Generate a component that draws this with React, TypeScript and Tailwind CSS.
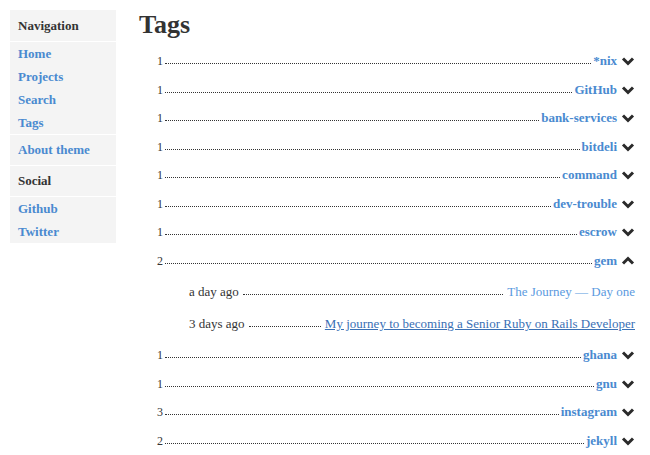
const tags = [
  { name: "*nix", count: 1 },
  { name: "GitHub", count: 1 },
  { name: "bank-services", count: 1 },
  { name: "bitdeli", count: 1 },
  { name: "command", count: 1 },
  { name: "dev-trouble", count: 1 },
  { name: "escrow", count: 1 },
  { name: "gem", count: 2, open: true },
  { name: "ghana", count: 1 },
  { name: "gnu", count: 1 },
  { name: "instagram", count: 3 },
  { name: "jekyll", count: 2 },
];

const posts = [
  { when: "a day ago", title: "The Journey — Day one", visited: false },
  { when: "3 days ago", title: "My journey to becoming a Senior Ruby on Rails Developer", visited: true },
];

function Chevron({ up }: { up?: boolean }) {
  return (
    <svg width="14" height="10" viewBox="0 0 14 10" className={up ? "rotate-180" : ""}>
      <path d="M2 2.5 L7 7.5 L12 2.5" fill="none" stroke="#2b2b2b" strokeWidth="3" strokeLinejoin="miter" />
    </svg>
  );
}

function Sidebar() {
  return (
    <aside className="w-[106px] shrink-0 self-start bg-[#f4f4f4] text-[13px] font-bold">
      <div className="h-[31px] flex items-center px-2 text-[#333]">Navigation</div>
      <ul className="border-t border-white">
        {["Home", "Projects", "Search", "Tags"].map((l) => (
          <li key={l} className="h-[23px] flex items-center px-2 text-[#4a8ad0]">
            {l}
          </li>
        ))}
      </ul>
      <div className="border-t border-white h-[31px] flex items-center px-2 text-[#4a8ad0]">About theme</div>
      <div className="border-t border-white h-[31px] flex items-center px-2 text-[#333]">Social</div>
      <ul className="border-t border-white">
        {["Github", "Twitter"].map((l) => (
          <li key={l} className="h-[23px] flex items-center px-2 text-[#4a8ad0]">
            {l}
          </li>
        ))}
      </ul>
    </aside>
  );
}

function Leader({ wide }: { wide?: boolean }) {
  return (
    <span
      className={
        wide
          ? "flex-1 mx-[4px] -translate-y-[1px] border-b border-dotted border-[#333]"
          : "flex-1 mx-[2px] -translate-y-[1px] border-b border-dotted border-[#333]"
      }
    />
  );
}

export default function App() {
  return (
    <div
      className="w-[650px] h-[455px] overflow-hidden bg-white flex gap-[23px] pl-[10px] pt-[10px]"
      style={{ fontFamily: '"Liberation Serif", serif' }}
    >
      <Sidebar />
      <main className="w-[496px]">
        <h1 className="text-[26px] font-bold text-[#333] leading-[30px]">Tags</h1>
        <ul className="mt-[7px] text-[13px]">
          {tags.map((t) => (
            <li key={t.name}>
              <div className="h-[28.5px] flex items-baseline pt-[4px] pl-[18px]">
                <span className="text-[#333] text-[12px]">{t.count}</span>
                <Leader />
                <span className="font-bold text-[#4a8ad0]">{t.name}</span>
                <span className="ml-[4px] w-[14px] flex justify-center translate-y-[1px]">
                  <Chevron up={t.open} />
                </span>
              </div>
              {t.open && (
                <ul className="pt-[2px] pl-[50px]">
                  {posts.map((p) => (
                    <li key={p.title} className="h-[32px] flex items-baseline pt-[5px]">
                      <span className="text-[#333]">{p.when}</span>
                      <Leader wide />
                      <span className={p.visited ? "text-[#3a70b5] underline" : "text-[#5b9ae0]"}>{p.title}</span>
                    </li>
                  ))}
                </ul>
              )}
            </li>
          ))}
        </ul>
      </main>
    </div>
  );
}
